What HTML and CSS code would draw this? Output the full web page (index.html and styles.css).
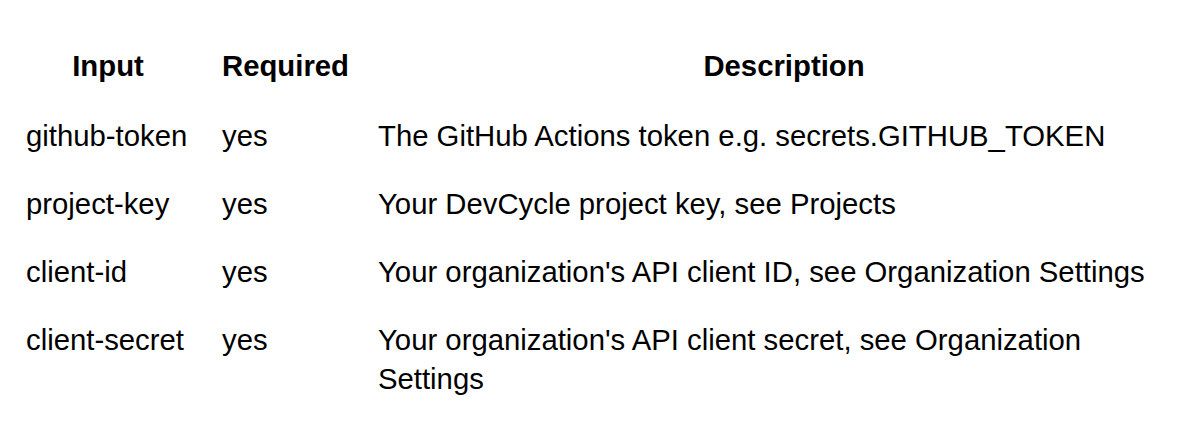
FILE: index.html
```html
<!DOCTYPE html>
<html lang="en">
<head>
<meta charset="utf-8">
<title>Inputs</title>
<link rel="stylesheet" href="styles.css">
</head>
<body>
<div class="page">
  <table class="inputs">
    <colgroup>
      <col class="col-input">
      <col class="col-required">
      <col class="col-desc">
    </colgroup>
    <thead>
      <tr>
        <th>Input</th>
        <th>Required</th>
        <th>Description</th>
      </tr>
    </thead>
    <tbody>
      <tr>
        <td>github-token</td>
        <td>yes</td>
        <td>The GitHub Actions token e.g. secrets.GITHUB_TOKEN</td>
      </tr>
      <tr>
        <td>project-key</td>
        <td>yes</td>
        <td>Your DevCycle project key, see Projects</td>
      </tr>
      <tr>
        <td>client-id</td>
        <td>yes</td>
        <td>Your organization's API client ID, see Organization Settings</td>
      </tr>
      <tr>
        <td>client-secret</td>
        <td>yes</td>
        <td>Your organization's API client secret, see Organization Settings</td>
      </tr>
    </tbody>
  </table>
</div>
</body>
</html>
```
FILE: styles.css
```css
html, body {
  margin: 0;
  padding: 0;
  background: #ffffff;
  overflow: hidden;
}

.page {
  padding: 31px 0 0 10px;
  font-family: "Liberation Sans", Arial, Helvetica, sans-serif;
  font-size: 29.3px;
  line-height: 39px;
  color: #000000;
}

.inputs {
  border-collapse: collapse;
  border-spacing: 0;
  table-layout: fixed;
  width: 1196px;
}

.col-input { width: 196px; }
.col-required { width: 156px; }
.col-desc { width: 844px; }

.inputs th {
  font-weight: bold;
  text-align: center;
  padding: 14.5px 16px 16.5px;
}

.inputs td {
  text-align: left;
  vertical-align: top;
  padding: 14.5px 16px;
}
```
